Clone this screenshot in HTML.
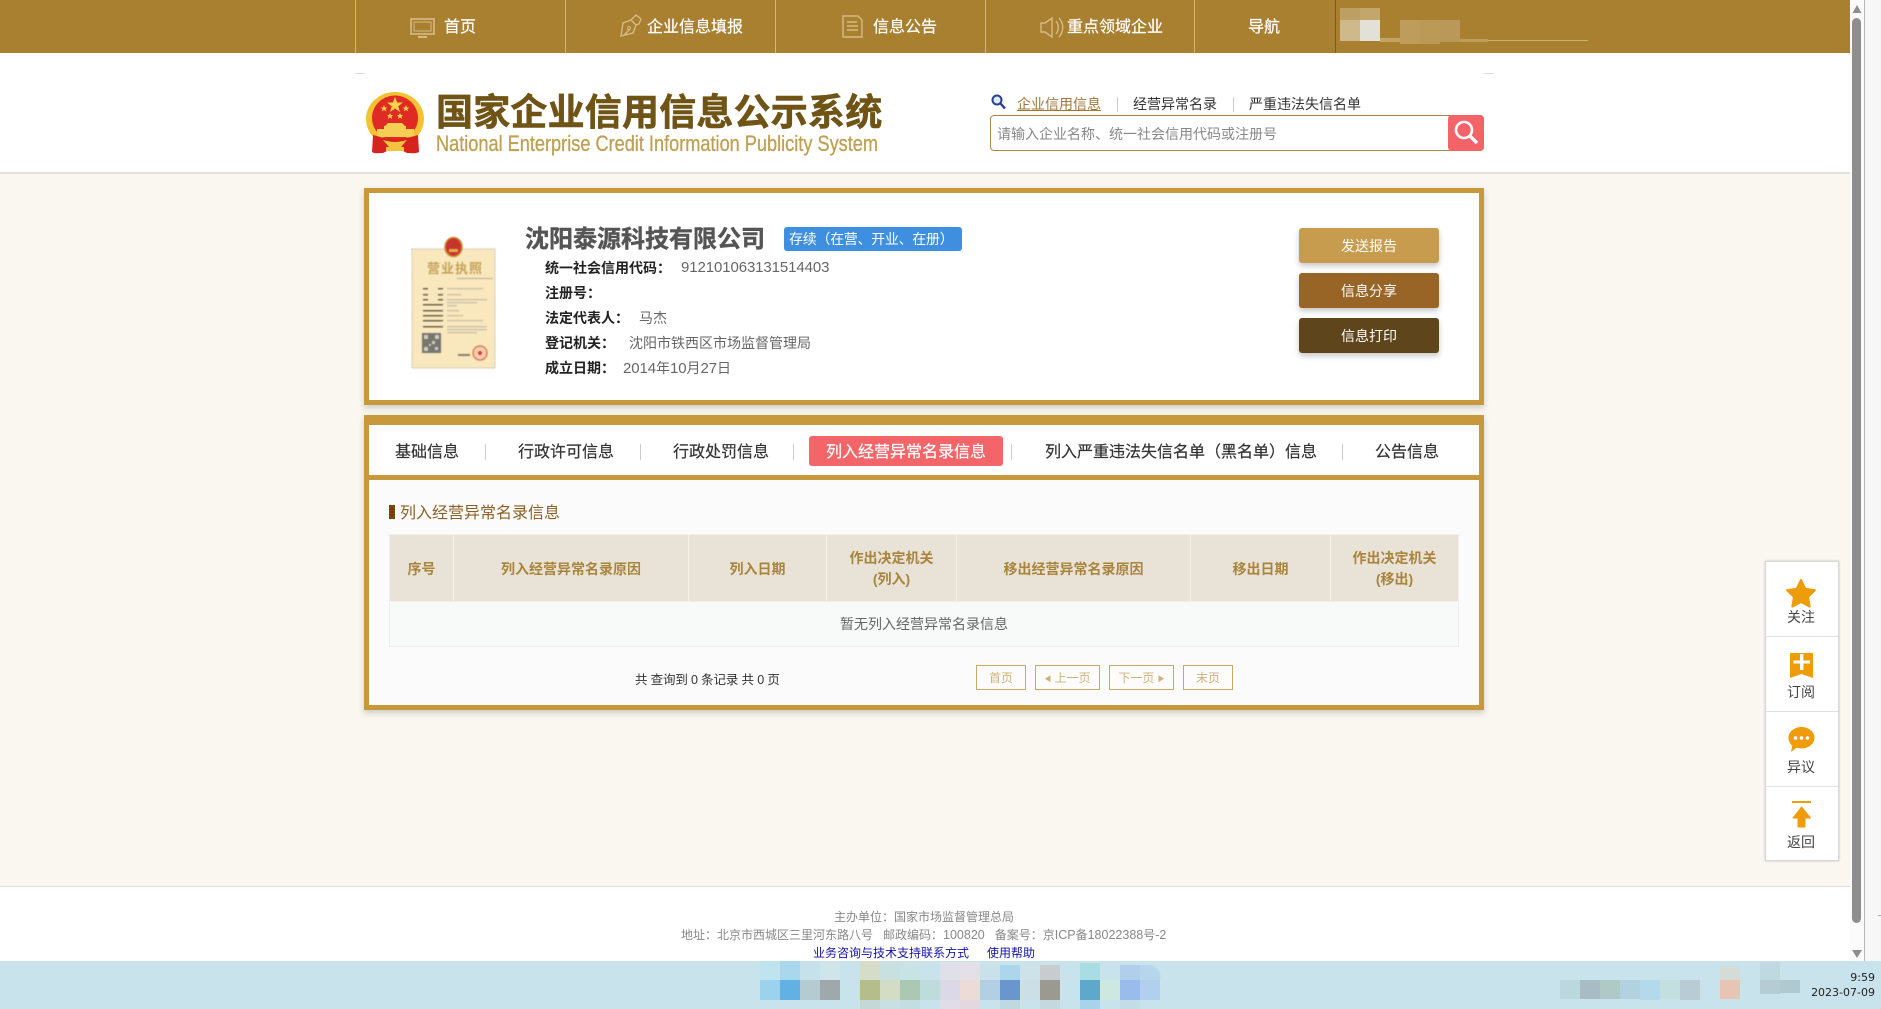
<!DOCTYPE html>
<html lang="zh-CN">
<head>
<meta charset="utf-8">
<title>国家企业信用信息公示系统</title>
<style>
html,body{margin:0;padding:0;width:1881px;height:1009px;overflow:hidden;background:#faf7f0;font-family:"Liberation Sans","Noto Sans CJK SC",sans-serif;}
.a{position:absolute;}
.t{position:absolute;white-space:nowrap;line-height:20px;height:20px;}
.sep{position:absolute;width:1px;}
.nav{color:#fff;font-size:16px;-webkit-text-stroke:.2px #fff;}
.lab{font-size:14px;font-weight:bold;color:#222;left:545px;}
.val{font-size:14px;color:#666;}
.num{font-size:15px;letter-spacing:-.1px;}
.btn{position:absolute;left:1299px;width:140px;height:35px;line-height:37px;text-align:center;color:#fff;font-size:14px;border-radius:3px;box-shadow:0 3px 6px rgba(0,0,0,.22);}
.tab{font-size:16px;color:#333;-webkit-text-stroke:.2px #333;}
.pg{position:absolute;top:665px;height:23px;line-height:25px;border:1px solid #c8a96a;color:#cdb27c;font-size:12px;text-align:center;background:#fdfcfa;box-sizing:content-box;}
table{position:absolute;left:389px;top:534px;width:1069px;border-collapse:collapse;table-layout:fixed;}
th{height:64px;padding:2px 0 0;background:#e9e3d7;color:#a9843c;font-size:14px;font-weight:bold;line-height:21px;border:1px solid #f3f0e9;text-align:center;}
td{height:44px;padding:0;background:#f8f9f9;color:#666;font-size:14px;text-align:center;border:1px solid #eeeeee;}
.side{font-size:14px;color:#444;text-align:center;width:74px;left:1764px;}
.ft{font-size:12px;color:#888;}
.ft b{font-weight:normal;font-size:12.500px;}
.lk{font-size:12px;color:#1414a8;}
</style>
</head>
<body>
<!-- top bar -->
<div class="a" style="left:0;top:0;width:1850px;height:53px;background:#a98030;"></div>
<div class="sep" style="left:355px;top:0;height:53px;background:#d2b77c;"></div>
<div class="sep" style="left:565px;top:0;height:53px;background:#d2b77c;"></div>
<div class="sep" style="left:775px;top:0;height:53px;background:#d2b77c;"></div>
<div class="sep" style="left:985px;top:0;height:53px;background:#d2b77c;"></div>
<div class="sep" style="left:1194px;top:0;height:53px;background:#d2b77c;"></div>
<div class="sep" style="left:1335px;top:0;height:53px;background:#7d5c1c;"></div>

<svg class="a" style="left:0;top:0;" width="1400" height="53" fill="none" stroke="#d4bb85" stroke-width="1.6">
  <rect x="411" y="19" width="23" height="15"/><rect x="414" y="22" width="17" height="9" stroke-width="1"/>
  <path d="M418 37h9" stroke-width="2"/>
  <path d="M621 36l2-13 8-3 5 5-3 8z M623 36l7-7 M631 20l5-5 5 4-2 5-3 1z" stroke-width="1.4"/>
  <circle cx="629" cy="28" r="1.5" stroke-width="1"/>
  <path d="M843 16h15l4 4v17h-19z M847 22h10 M847 26h11 M847 30h11" stroke-width="1.4"/>
  <path d="M1041 23v9h4l7 5V18l-7 5z M1056 21c3 4 3 9 0 13 M1059 18c5 6 5 13 0 19" stroke-width="1.4"/>
</svg>

<span class="t nav" style="left:444px;top:18px;">首页</span>
<span class="t nav" style="left:647px;top:18px;">企业信息填报</span>
<span class="t nav" style="left:873px;top:18px;">信息公告</span>
<span class="t nav" style="left:1067px;top:18px;">重点领域企业</span>
<span class="t nav" style="left:1248px;top:18px;">导航</span>

<svg class="a" style="left:0;top:0;" width="1881" height="1009">
  <!-- top bar mosaic -->
  <rect x="1340" y="8" width="20" height="12" fill="#bd9f63"/>
  <rect x="1360" y="8" width="20" height="12" fill="#c2a66c"/>
  <rect x="1340" y="20" width="20" height="21" fill="#cfb98a"/>
  <rect x="1360" y="20" width="20" height="21" fill="#e3e0d8"/>
  <rect x="1380" y="38" width="20" height="4" fill="#c3a567"/>
  <rect x="1400" y="20" width="20" height="24" fill="#bd9c5c"/>
  <rect x="1420" y="20" width="20" height="24" fill="#bb9a57"/>
  <rect x="1440" y="20" width="20" height="22" fill="#b9985a"/>
  <rect x="1460" y="39" width="28" height="3" fill="#bd9c5c"/>
  <rect x="1488" y="40" width="100" height="1" fill="#cbad70"/>
  <!-- taskbar -->
  <rect x="0" y="961" width="1881" height="48" fill="#c9e3ec"/>
  <g shape-rendering="crispEdges">
    <rect x="760" y="960" width="20" height="20" fill="#bfe3ef"/><rect x="760" y="980" width="20" height="20" fill="#9bd2ec"/>
    <rect x="780" y="960" width="20" height="20" fill="#a9d8ec"/><rect x="780" y="980" width="20" height="20" fill="#61b1e4"/>
    <rect x="800" y="960" width="20" height="20" fill="#c6e1e9"/><rect x="800" y="980" width="20" height="20" fill="#b4cbd2"/>
    <rect x="820" y="960" width="20" height="20" fill="#cfe5ec"/><rect x="820" y="980" width="20" height="20" fill="#9fa8aa"/>
    <rect x="860" y="960" width="20" height="20" fill="#d5ddc9"/><rect x="860" y="980" width="20" height="20" fill="#b5bd8b"/><rect x="860" y="1000" width="20" height="9" fill="#c4d9d6"/>
    <rect x="880" y="960" width="20" height="20" fill="#c8e0e0"/><rect x="880" y="980" width="20" height="20" fill="#d3dcc4"/><rect x="880" y="1000" width="20" height="9" fill="#c8e0e4"/>
    <rect x="900" y="960" width="20" height="20" fill="#c9e2e4"/><rect x="900" y="980" width="20" height="20" fill="#abc8b2"/><rect x="900" y="1000" width="20" height="9" fill="#c3dde2"/>
    <rect x="920" y="980" width="20" height="20" fill="#bfdcdc"/>
    <rect x="940" y="962" width="20" height="18" fill="#dfe0e8"/><rect x="940" y="980" width="20" height="20" fill="#dbd9e8"/><rect x="940" y="1000" width="20" height="9" fill="#e0dce8"/>
    <rect x="960" y="962" width="20" height="18" fill="#e3e0e8"/><rect x="960" y="980" width="20" height="20" fill="#ecdcd8"/><rect x="960" y="1000" width="20" height="9" fill="#e4d8e0"/>
    <rect x="980" y="964" width="20" height="16" fill="#c9e2ea"/><rect x="980" y="980" width="20" height="20" fill="#b3cfe2"/>
    <rect x="1000" y="965" width="20" height="15" fill="#acd6ec"/><rect x="1000" y="980" width="20" height="20" fill="#6996cd"/><rect x="1000" y="1000" width="20" height="9" fill="#c0d8e0"/>
    <rect x="1020" y="965" width="20" height="15" fill="#cce3ea"/><rect x="1020" y="980" width="20" height="20" fill="#cbe0e6"/>
    <rect x="1040" y="965" width="20" height="15" fill="#c7cdce"/><rect x="1040" y="980" width="20" height="20" fill="#9c9a90"/><rect x="1040" y="1000" width="20" height="9" fill="#c3d9dd"/>
    <rect x="1080" y="963" width="20" height="17" fill="#a8dde4"/><rect x="1080" y="980" width="20" height="20" fill="#5da8cb"/><rect x="1080" y="1000" width="20" height="9" fill="#a8d3e8"/>
    <rect x="1100" y="980" width="20" height="20" fill="#cce8e0"/>
    <rect x="1120" y="965" width="20" height="15" fill="#b0cfec"/><rect x="1120" y="980" width="20" height="20" fill="#9abcec"/><rect x="1120" y="1000" width="20" height="9" fill="#c4dce6"/>
    <rect x="1140" y="980" width="20" height="20" fill="#b1cfee"/>
    <rect x="1560" y="980" width="20" height="19" fill="#bcd7de"/>
    <rect x="1580" y="980" width="20" height="19" fill="#a8bcc6"/>
    <rect x="1600" y="980" width="20" height="19" fill="#aec9c6"/>
    <rect x="1620" y="980" width="20" height="19" fill="#b2d2e2"/>
    <rect x="1640" y="980" width="20" height="20" fill="#b4d9ea"/>
    <rect x="1660" y="980" width="20" height="19" fill="#c4dfe0"/>
    <rect x="1680" y="980" width="20" height="20" fill="#b9ccd6"/>
    <rect x="1720" y="966" width="20" height="14" fill="#d4dcd8"/>
    <rect x="1720" y="980" width="20" height="19" fill="#e8c4b4"/>
    <rect x="1760" y="962" width="20" height="18" fill="#c0d8e0"/>
    <rect x="1760" y="980" width="20" height="14" fill="#b6ccd4"/>
    <rect x="1780" y="980" width="20" height="13" fill="#b0c8d0"/>
  </g>
  <path d="M1140 965h10c6 1 12 6 10 15h-20z" fill="#b6d6ec"/>
</svg>

<!-- header -->
<div class="a" style="left:0;top:53px;width:1850px;height:119px;background:#fff;border-bottom:2px solid #e2e0dc;"></div>
<div class="a" style="left:355px;top:73px;width:10px;height:1px;background:#ddd;"></div>
<div class="a" style="left:1484px;top:73px;width:10px;height:1px;background:#ddd;"></div>

<!-- emblem -->
<svg class="a" style="left:362px;top:90px;" width="68" height="68" viewBox="0 0 68 68">
  <ellipse cx="33" cy="29" rx="29" ry="27" fill="#f2c230"/>
  <ellipse cx="33" cy="28" rx="23" ry="22.500" fill="#e02a24"/>
  <polygon points="33,7 35.200,12.500 41,12.500 36.300,16.300 38,22 33,18.500 28,22 29.700,16.300 25,12.500 30.800,12.500" fill="#f7d24a"/>
  <polygon points="22,15 23,17.500 25.500,17.500 23.500,19 24.300,21.500 22,20 19.700,21.500 20.500,19 18.500,17.500 21,17.500" fill="#f7d24a"/>
  <polygon points="44,15 45,17.500 47.500,17.500 45.500,19 46.300,21.500 44,20 41.700,21.500 42.500,19 40.500,17.500 43,17.500" fill="#f7d24a"/>
  <polygon points="28,23 29,25 31,25 29.500,26.500 30,29 28,27.500 26,29 26.500,26.500 25,25 27,25" fill="#f7d24a"/>
  <polygon points="38,23 39,25 41,25 39.500,26.500 40,29 38,27.500 36,29 36.500,26.500 35,25 37,25" fill="#f7d24a"/>
  <path d="M26 33h14l3 3H23z M22 36h22v3H22z M15 39h37v8H15z" fill="#f5cf55"/>
  <path d="M11 45c7 2 13 4 22 4s16-2 23-4l1 17c-4 2-8 1-12 1l-6-3h-12l-6 3c-4 0-8 1-11-1z" fill="#d7231e"/>
  <path d="M21 50c4 1 8 2 12 2s8-1 12-2l-6 7h-12z M24 57h18v4H24z" fill="#f2c53c"/>
</svg>

<span class="t" style="left:436px;top:92px;height:42px;line-height:42px;font-size:37px;font-weight:bold;color:#6f5416;letter-spacing:.2px;-webkit-text-stroke:.6px #6f5416;">国家企业信用信息公示系统</span>
<svg class="a" style="left:430px;top:131px;" width="460" height="30"><text x="6" y="20" font-family="Liberation Sans, sans-serif" font-size="22" fill="#bfa052" stroke="#bfa052" stroke-width=".3" textLength="442" lengthAdjust="spacingAndGlyphs">National Enterprise Credit Information Publicity System</text></svg>

<!-- search -->
<svg class="a" style="left:990px;top:93px;" width="18" height="18"><circle cx="7" cy="7" r="4.500" fill="#dfeaf8" stroke="#27408f" stroke-width="2"/><path d="M10.500 10.500l4.500 5" stroke="#27408f" stroke-width="2.400"/></svg>
<span class="t" style="left:1017px;top:94px;font-size:14px;color:#a0763a;text-decoration:underline;">企业信用信息</span>
<div class="sep" style="left:1117px;top:97px;height:15px;background:#ccc;"></div>
<span class="t" style="left:1133px;top:94px;font-size:14px;color:#333;">经营异常名录</span>
<div class="sep" style="left:1233px;top:97px;height:15px;background:#ccc;"></div>
<span class="t" style="left:1249px;top:94px;font-size:14px;color:#333;">严重违法失信名单</span>
<div class="a" style="left:990px;top:115px;width:492px;height:34px;border:1px solid #a98a48;border-radius:4px;background:#fff;"></div>
<span class="t" style="left:997px;top:124px;font-size:14px;color:#888;">请输入企业名称、统一社会信用代码或注册号</span>
<div class="a" style="left:1448px;top:115px;width:36px;height:36px;background:#f46368;border-radius:4px;"></div>
<svg class="a" style="left:1448px;top:115px;" width="36" height="36" fill="none" stroke="#fff"><circle cx="16" cy="15" r="8" stroke-width="2.600"/><path d="M22 21l7 7" stroke-width="3.400"/></svg>

<!-- card 1 -->
<div class="a" style="left:364px;top:188px;width:1110px;height:207px;border:5px solid #c8993a;background:#fff;box-shadow:0 3px 6px rgba(0,0,0,.18);"></div>

<!-- certificate -->
<svg class="a" style="left:408px;top:236px;filter:blur(.4px);" width="92" height="136" viewBox="0 0 92 136">
  <rect x="4" y="13" width="83" height="119" fill="#f9e8bd" stroke="#cfc9b0" stroke-width="1.400" stroke-dasharray="1.500 1"/>
  <ellipse cx="45.500" cy="11" rx="8.500" ry="9.500" fill="#c8342a" stroke="#c98f3c" stroke-width="1.600"/>
  <rect x="41" y="13" width="9" height="3" fill="#e0b04a"/>
  <text x="19" y="37" font-size="13" fill="#c4a35a" font-weight="bold" font-family="Liberation Sans, Noto Sans CJK SC, sans-serif" letter-spacing="1">营业执照</text>
  <rect x="49" y="42" width="36" height="1" fill="#b9ad92"/>
  <g fill="#6e6352">
    <rect x="15" y="52" width="5" height="1.500"/><rect x="30" y="52" width="5" height="1.500"/>
    <rect x="15" y="58" width="5" height="1.500"/><rect x="30" y="58" width="5" height="1.500"/>
    <rect x="15" y="63" width="5" height="1.500"/><rect x="30" y="63" width="5" height="1.500"/>
    <rect x="15" y="68" width="20" height="1.500"/><rect x="15" y="74" width="20" height="1.500"/><rect x="15" y="79" width="20" height="1.500"/><rect x="15" y="84" width="20" height="1.500"/><rect x="15" y="90" width="20" height="1.500"/>
  </g>
  <g fill="#c9bfa8">
    <rect x="39" y="52" width="36" height="1.300"/><rect x="39" y="58" width="14" height="1.300"/><rect x="39" y="63" width="40" height="1.300"/><rect x="39" y="66" width="30" height="1.300"/><rect x="39" y="69" width="10" height="1.300"/><rect x="39" y="74" width="12" height="1.300"/><rect x="39" y="79" width="16" height="1.300"/><rect x="39" y="84" width="36" height="1.300"/><rect x="39" y="90" width="40" height="1.300"/><rect x="39" y="93" width="40" height="1.300"/><rect x="39" y="96" width="30" height="1.300"/>
  </g>
  <rect x="14" y="97" width="19" height="20" fill="#77766f"/>
  <path d="M16 99h4v4h-4z M27 99h4v4h-4z M16 111h4v4h-4z M24 105h3v3h-3z M27 111h3v3h-3z M21 108h2v2h-2z" fill="#cfccbf"/>
  <rect x="50" y="118" width="12" height="2" fill="#8d7f6b"/>
  <circle cx="72" cy="117" r="7" fill="#f3cdb0" stroke="#df7a5a" stroke-width="1.400"/>
  <circle cx="72" cy="117" r="2" fill="#d8402c"/>
</svg>

<span class="t" style="left:525px;top:225px;height:30px;line-height:30px;font-size:24px;font-weight:bold;color:#555;-webkit-text-stroke:.4px #555;">沈阳泰源科技有限公司</span>
<div class="a" style="left:784px;top:227px;width:178px;height:24px;background:#3f8fe0;border-radius:3px;"></div>
<span class="t" style="left:789px;top:229px;font-size:14px;color:#fff;letter-spacing:-.3px;">存续（在营、开业、在册）</span>

<span class="t lab" style="top:258px;">统一社会信用代码：</span><span class="t val num" style="left:681px;top:258px;">912101063131514403</span>
<span class="t lab" style="top:283px;">注册号：</span>
<span class="t lab" style="top:308px;">法定代表人：</span><span class="t val" style="left:639px;top:308px;">马杰</span>
<span class="t lab" style="top:333px;">登记机关：</span><span class="t val" style="left:629px;top:333px;">沈阳市铁西区市场监督管理局</span>
<span class="t lab" style="top:358px;">成立日期：</span><span class="t val" style="left:623px;top:358px;"><span class="num">2014</span>年<span class="num">10</span>月<span class="num">27</span>日</span>

<div class="btn" style="top:228px;background:#c89c4e;">发送报告</div>
<div class="btn" style="top:273px;background:#986526;">信息分享</div>
<div class="btn" style="top:318px;background:#5f451b;">信息打印</div>

<!-- card 2 -->
<div class="a" style="left:364px;top:415px;width:1110px;height:280px;border:5px solid #c8993a;border-top-width:10px;background:#fbfbfb;box-shadow:0 3px 6px rgba(0,0,0,.18);"></div>
<div class="a" style="left:369px;top:425px;width:1110px;height:50px;background:#fff;border-bottom:5px solid #c8993a;"></div>

<span class="t tab" style="left:395px;top:443px;">基础信息</span>
<div class="sep" style="left:485px;top:444px;height:16px;background:#ccc;"></div>
<span class="t tab" style="left:518px;top:443px;">行政许可信息</span>
<div class="sep" style="left:640px;top:444px;height:16px;background:#ccc;"></div>
<span class="t tab" style="left:673px;top:443px;">行政处罚信息</span>
<div class="sep" style="left:793px;top:444px;height:16px;background:#ccc;"></div>
<div class="a" style="left:809px;top:436px;width:194px;height:30px;background:#f4656a;border-radius:3px;"></div>
<span class="t tab" style="left:826px;top:443px;color:#fff;-webkit-text-stroke:.2px #fff;">列入经营异常名录信息</span>
<div class="sep" style="left:1011px;top:444px;height:16px;background:#ccc;"></div>
<span class="t tab" style="left:1045px;top:443px;">列入严重违法失信名单（黑名单）信息</span>
<div class="sep" style="left:1342px;top:444px;height:16px;background:#ccc;"></div>
<span class="t tab" style="left:1375px;top:443px;">公告信息</span>

<div class="a" style="left:389px;top:505px;width:6px;height:14px;background:#7a4208;"></div>
<span class="t" style="left:400px;top:504px;font-size:16px;color:#8a5f26;">列入经营异常名录信息</span>

<table>
  <colgroup><col style="width:64px"><col style="width:235px"><col style="width:138px"><col style="width:130px"><col style="width:234px"><col style="width:140px"><col style="width:128px"></colgroup>
  <tr><th>序号</th><th>列入经营异常名录原因</th><th>列入日期</th><th>作出决定机关<br>(列入)</th><th>移出经营异常名录原因</th><th>移出日期</th><th>作出决定机关<br>(移出)</th></tr>
  <tr><td colspan="7">暂无列入经营异常名录信息</td></tr>
</table>

<span class="t" style="left:635px;top:670px;font-size:12.500px;color:#333;letter-spacing:-.15px;">共 查询到 0 条记录 共 0 页</span>
<div class="pg" style="left:976px;width:48px;">首页</div>
<div class="pg" style="left:1035px;width:63px;"><span style="font-size:7px;vertical-align:1px;">◀</span> 上一页</div>
<div class="pg" style="left:1109px;width:63px;">下一页 <span style="font-size:7px;vertical-align:1px;">▶</span></div>
<div class="pg" style="left:1183px;width:48px;">末页</div>

<!-- side float -->
<div class="a" style="left:1765px;top:561px;width:72px;height:298px;background:#fff;border:1px solid #d8d8d8;box-shadow:0 0 2px rgba(0,0,0,.25);"></div>
<div class="a" style="left:1766px;top:636px;width:72px;height:1px;background:#e2e2e2;"></div>
<div class="a" style="left:1766px;top:711px;width:72px;height:1px;background:#e2e2e2;"></div>
<div class="a" style="left:1766px;top:786px;width:72px;height:1px;background:#e2e2e2;"></div>
<svg class="a" style="left:1780px;top:575px;" width="44" height="260" fill="#ee9c0a">
  <path d="M21 5l4.300 8.800 9.700 1.400-7 6.800 1.700 9.600L21 27l-8.700 4.600L14 22 7 15.200l9.700-1.400z" stroke="#ee9c0a" stroke-width="2" stroke-linejoin="round"/>
  <path d="M10 78h23v25l-11.500-4L10 103z"/>
  <path d="M20 83h3.400v6.500H30v3h-6.600V99H20v-6.500h-6.500v-3H20z" fill="#fff" transform="translate(0 -4)"/>
  <path d="M21.500 152c7.200 0 13 4.800 13 10.700s-5.800 10.700-13 10.700c-1.700 0-3.300-.3-4.800-.8L11 177l1.200-6.400c-2.200-2-3.700-4.800-3.700-7.900 0-5.900 5.800-10.700 13-10.700z"/>
  <g fill="#fff"><circle cx="15.500" cy="163" r="1.800"/><circle cx="21.500" cy="163" r="1.800"/><circle cx="27.500" cy="163" r="1.800"/></g>
  <rect x="12" y="226" width="19" height="2"/>
  <path d="M21.500 232l9 11h-5.500v9h-7v-9H13z" stroke="#ee9c0a" stroke-linejoin="round"/>
</svg>
<span class="t side" style="top:607px;">关注</span>
<span class="t side" style="top:682px;">订阅</span>
<span class="t side" style="top:757px;">异议</span>
<span class="t side" style="top:832px;">返回</span>

<!-- footer -->
<div class="a" style="left:0;top:886px;width:1850px;height:75px;background:#fff;border-top:1px solid #ddd;box-sizing:border-box;"></div>
<span class="t ft" style="left:834px;top:907px;">主办单位：国家市场监督管理总局</span>
<span class="t ft" style="left:681px;top:925px;">地址：北京市西城区三里河东路八号&nbsp;&nbsp;&nbsp;邮政编码：<b>100820</b>&nbsp;&nbsp;&nbsp;备案号：京<b>ICP</b>备<b>18022388</b>号<b>-2</b></span>
<span class="t lk" style="left:813px;top:943px;">业务咨询与技术支持联系方式</span>
<span class="t lk" style="left:987px;top:943px;">使用帮助</span>

<!-- scrollbar -->
<div class="a" style="left:1850px;top:0;width:14px;height:961px;background:#fbfbfb;"></div>
<div class="a" style="left:1864px;top:0;width:1px;height:961px;background:#b8b8b8;"></div>
<div class="a" style="left:1865px;top:0;width:16px;height:961px;background:#f7f7f7;"></div>
<div class="a" style="left:1852px;top:18px;width:9px;height:905px;background:#8e8e8e;border-radius:4.500px;"></div>
<svg class="a" style="left:1851px;top:4px;" width="12" height="10"><path d="M6 1l4.500 8h-9z" fill="#8e8e8e"/></svg>
<svg class="a" style="left:1851px;top:949px;" width="12" height="10"><path d="M1 1h10l-5 8z" fill="#8e8e8e"/></svg>
<div class="a" style="left:1878px;top:915px;width:3px;height:1px;background:#aaa;"></div>

<!-- clock -->
<span class="t" style="right:6px;top:968px;font-size:11px;color:#222;font-family:'DejaVu Sans',sans-serif;">9:59</span>
<span class="t" style="right:6px;top:983px;font-size:11px;color:#222;font-family:'DejaVu Sans',sans-serif;">2023-07-09</span>
</body>
</html>
